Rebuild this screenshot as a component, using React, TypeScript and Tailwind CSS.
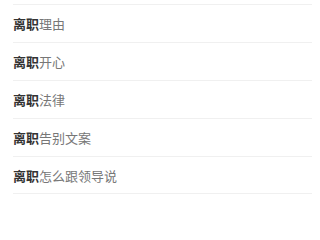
const items = ["理由", "开心", "法律", "告别文案", "怎么跟领导说"];

export default function App() {
  return (
    <div
      className="h-[200px] w-[320px] overflow-hidden bg-white pt-[4px]"
      style={{ fontFamily: '"Noto Sans CJK SC", "Noto Sans", sans-serif' }}
    >
      <ul className="ml-[13px] mr-[8px]">
        {items.map((rest) => (
          <li
            key={rest}
            className="flex h-[38px] items-center border-t border-[#f0f0f0] text-[13px] leading-none last:border-b"
          >
            <span className="font-bold text-[#333333]">离职</span>
            <span className="text-[#777777]">{rest}</span>
          </li>
        ))}
      </ul>
    </div>
  );
}
